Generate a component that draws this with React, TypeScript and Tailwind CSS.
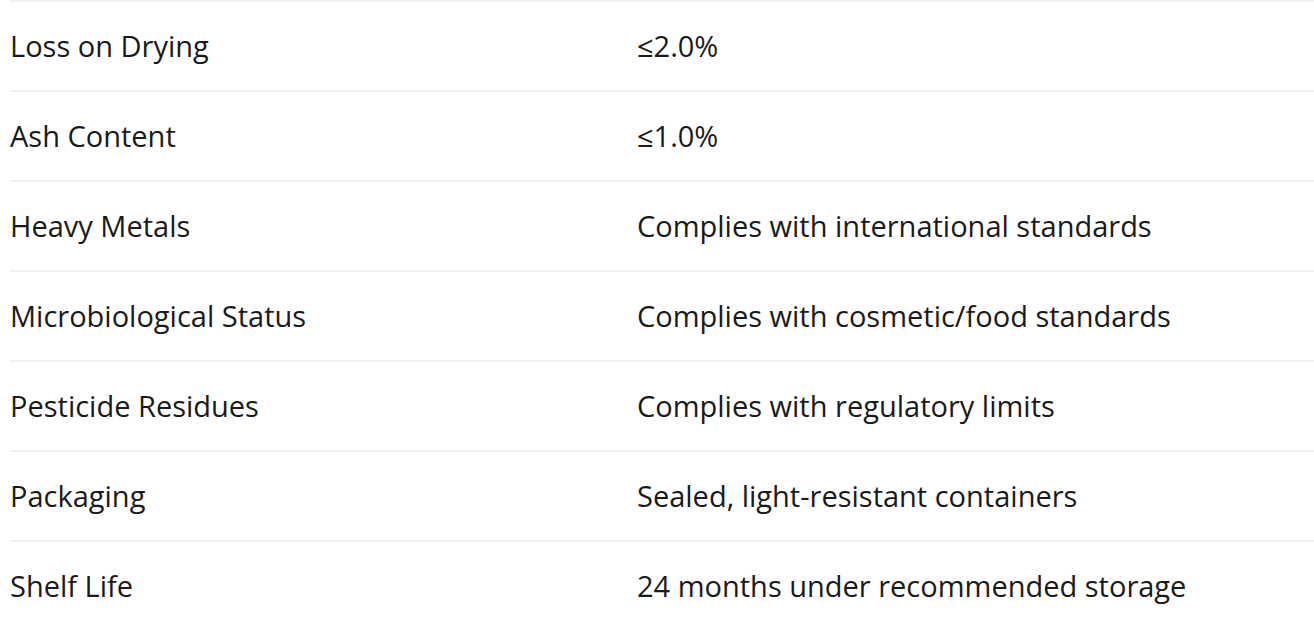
const rows: [string, string][] = [
  ['Loss on Drying', '≤2.0%'],
  ['Ash Content', '≤1.0%'],
  ['Heavy Metals', 'Complies with international standards'],
  ['Microbiological Status', 'Complies with cosmetic/food standards'],
  ['Pesticide Residues', 'Complies with regulatory limits'],
  ['Packaging', 'Sealed, light-resistant containers'],
  ['Shelf Life', '24 months under recommended storage'],
];

export default function App() {
  return (
    <div className="h-[630px] overflow-hidden bg-white pl-[10px] text-[#1a1a1a] [font-family:'Open_Sans',sans-serif]">
      <div className="flex flex-col">
        {rows.map(([label, value]) => (
          <div key={label} className="grid h-[90px] grid-cols-[627px_1fr] items-center border-t-2 border-[#f1f1f1] text-[29px]">
            <span>{label}</span>
            <span>{value}</span>
          </div>
        ))}
      </div>
    </div>
  );
}
